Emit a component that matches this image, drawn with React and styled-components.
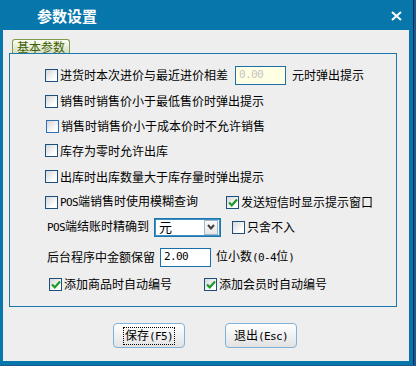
import React from 'react';
import styled, { createGlobalStyle } from 'styled-components';

const Global = createGlobalStyle`
  html, body { margin: 0; padding: 0; }
  body {
    background: #1d5a92;
    width: 416px; height: 366px; overflow: hidden;
    font-family: "Noto Sans CJK SC", "Noto Sans", sans-serif;
  }
`;

const Win = styled.div`
  width: 414px; height: 365px; box-sizing: border-box;
  background: #0676ab;
  border-right: 1px solid #0b2a58;
  display: flex; flex-direction: column;
`;

const TitleBar = styled.div`
  height: 30px; flex: none; box-sizing: border-box;
  display: flex; align-items: center; justify-content: space-between;
  padding: 2px 11px 0 37px;
`;

const Title = styled.div`
  color: #fff; font-size: 15px; font-weight: 700; line-height: 16px;
`;

const Body = styled.div`
  flex: 1; margin: 0 4px 4px 3px; background: #eeeeee;
  padding: 9px 13px 0 6px;
  display: flex; flex-direction: column;
`;

const Tab = styled.div`
  align-self: flex-start; margin-left: 3px;
  height: 14px; box-sizing: border-box; padding: 0 4px;
  border: 1px solid #7f9a4c; border-bottom: none;
  border-radius: 3px 3px 0 0;
  background: linear-gradient(#fbfdf5, #d6dfc4);
  color: #3f6100; font-size: 12px; line-height: 13px;
`;

const Group = styled.div`
  width: 388px; height: 254px; box-sizing: border-box;
  border: 1px solid #1b78ae;
  padding-top: 8px;
  display: flex; flex-direction: column;
`;

const Row = styled.div`
  height: ${p => p.$h}px; display: flex; align-items: center;
  padding-left: ${p => p.$pl}px;
  font-size: 12px; color: #000; line-height: 14px; white-space: nowrap;
`;

const Item = styled.label`
  display: flex; align-items: center; gap: 2px;
  margin-left: ${p => p.$ml || 0}px;
`;

const Box = styled.span`
  width: 13px; height: 13px; box-sizing: border-box; flex: none;
  border: 1px solid ${p => (p.$hot ? '#2f6fb4' : '#1d4f7e')};
  background: linear-gradient(135deg, #d6d6d6, #ffffff 75%);
  display: flex; align-items: center; justify-content: center;
  margin-left: ${p => (p.$hot ? 1 : 0)}px;
`;

const Asc = styled.span`
  font-family: "DejaVu Sans Mono", "Liberation Mono", monospace;
  font-size: 11px; letter-spacing: -0.6px;
`;

const Field = styled.div`
  width: 51px; height: 19px; box-sizing: border-box;
  border: 1px solid #1b6fa8;
  background: ${p => (p.$disabled ? '#ffffe3' : '#ffffff')};
  color: ${p => (p.$disabled ? '#c4c4c4' : '#000')};
  display: flex; align-items: center; padding-left: 3px;
  margin: 0 ${p => p.$mr}px 0 ${p => p.$ml}px;
`;

const Select = styled.div`
  width: 67px; height: 19px; box-sizing: border-box;
  border: 1px solid #1b78ae; box-shadow: inset 0 0 0 1px #3d8fc2;
  background: #fff; margin: 0 11px 0 5px;
  display: flex; align-items: center; justify-content: space-between;
  padding: 2px 2px 2px 4px; font-size: 13px;
`;

const DropBtn = styled.span`
  width: 14px; height: 15px; box-sizing: border-box;
  border: 1px solid #9fb8cc; background: linear-gradient(#fafafa, #e6e6e6);
  display: flex; align-items: center; justify-content: center;
`;

const ButtonBar = styled.div`
  display: flex; justify-content: center; gap: 40px;
  margin-top: 16px; padding-left: 2px; width: 388px;
`;

const Btn = styled.button`
  width: 72px; height: 25px; box-sizing: border-box;
  border: 1px solid #7eb2da; border-radius: 4px;
  background: linear-gradient(#ffffff, #e2e2e2);
  font-family: "Noto Sans CJK SC", sans-serif; font-size: 12px; color: #000;
  display: flex; align-items: center; justify-content: center; padding: 0;
`;

const Focus = styled.span`
  outline: ${p => (p.$on ? '1px dotted #000' : 'none')};
  padding: 0 1px; line-height: 14px;
`;

const Check = () => (
  <svg width="10" height="9" viewBox="0 0 10 9">
    <path d="M1 4.5 L3.8 7.3 L9 1.5" fill="none" stroke="#1f9a2a" strokeWidth="2.2" />
  </svg>
);

const CB = ({ checked, hot, ml, children }) => (
  <Item $ml={ml}>
    <Box $hot={hot}>{checked && <Check />}</Box>
    <span>{children}</span>
  </Item>
);

export default function App() {
  return (
    <>
      <Global />
      <Win>
        <TitleBar>
          <Title>参数设置</Title>
          <svg width="11" height="10" viewBox="0 0 11 10">
            <path d="M1 1 L10 9 M10 1 L1 9" stroke="#fff" strokeWidth="2" />
          </svg>
        </TitleBar>
        <Body>
          <Tab>基本参数</Tab>
          <Group>
            <Row $h={26} $pl={35}>
              <CB>进货时本次进价与最近进价相差</CB>
              <Field $disabled $ml={7} $mr={6}><Asc>0.00</Asc></Field>
              <span>元时弹出提示</span>
            </Row>
            <Row $h={26} $pl={35}><CB>销售时销售价小于最低售价时弹出提示</CB></Row>
            <Row $h={24} $pl={35}><CB hot>销售时销售价小于成本价时不允许销售</CB></Row>
            <Row $h={25} $pl={35}><CB>库存为零时允许出库</CB></Row>
            <Row $h={27} $pl={35}><CB>出库时出库数量大于库存量时弹出提示</CB></Row>
            <Row $h={24} $pl={35}>
              <CB><Asc>POS</Asc>端销售时使用模糊查询</CB>
              <CB checked ml={28}>发送短信时显示提示窗口</CB>
            </Row>
            <Row $h={26} $pl={37}>
              <span><Asc>POS</Asc>端结账时精确到</span>
              <Select>
                <span>元</span>
                <DropBtn>
                  <svg width="8" height="6" viewBox="0 0 8 6">
                    <path d="M1 1 L4 4.5 L7 1" fill="none" stroke="#404040" strokeWidth="2" />
                  </svg>
                </DropBtn>
              </Select>
              <CB>只舍不入</CB>
            </Row>
            <Row $h={34} $pl={37}>
              <span>后台程序中金额保留</span>
              <Field $ml={5} $mr={5}><Asc>2.00</Asc></Field>
              <span>位小数<Asc>(0-4</Asc>位<Asc>)</Asc></span>
            </Row>
            <Row $h={20} $pl={39}>
              <CB checked>添加商品时自动编号</CB>
              <CB checked ml={32}>添加会员时自动编号</CB>
            </Row>
          </Group>
          <ButtonBar>
            <Btn><Focus $on>保存<Asc>(F5)</Asc></Focus></Btn>
            <Btn><Focus>退出<Asc>(Esc)</Asc></Focus></Btn>
          </ButtonBar>
        </Body>
      </Win>
    </>
  );
}
